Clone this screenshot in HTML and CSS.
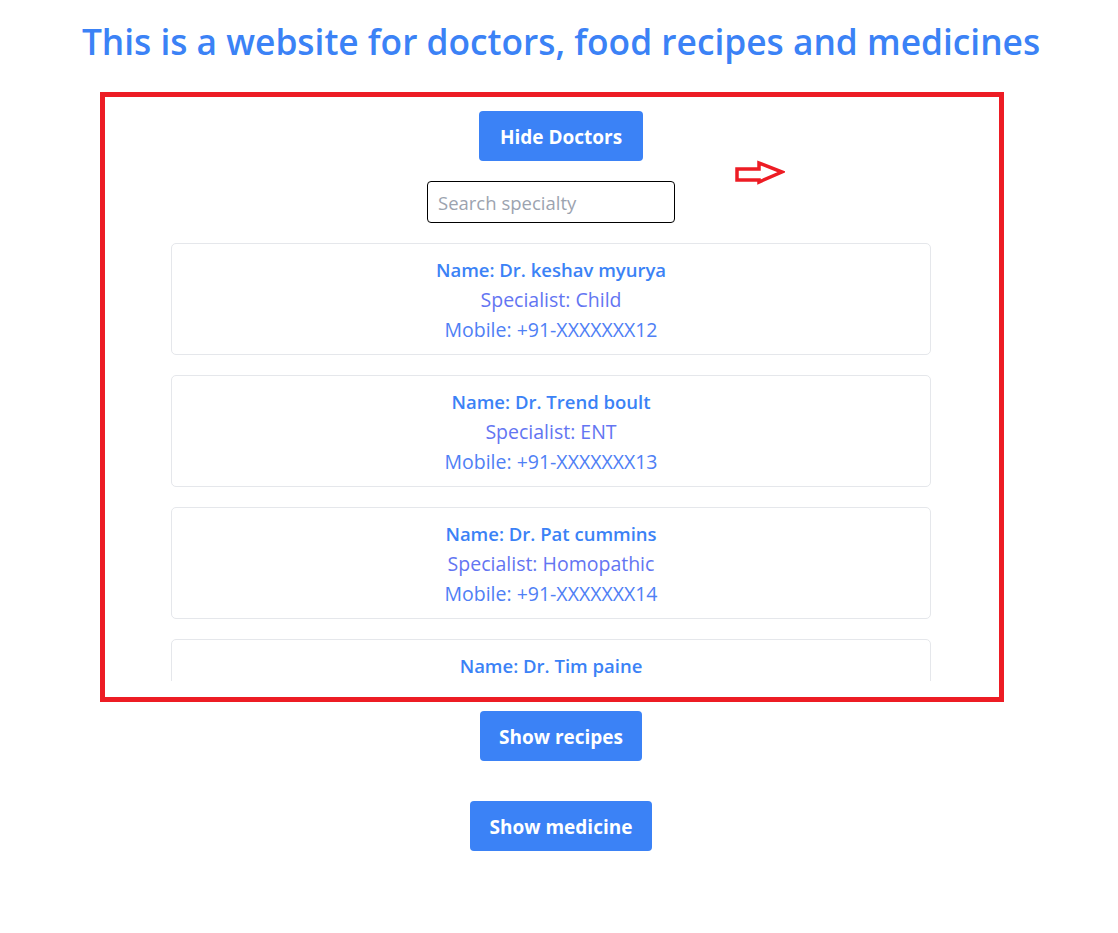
FILE: index.html
```html
<!DOCTYPE html>
<html lang="en">
<head>
<meta charset="utf-8">
<title>Doctors, recipes and medicines</title>
<link rel="stylesheet" href="styles.css">
</head>
<body>
<div class="page">
  <h1 class="title">This is a website for doctors, food recipes and medicines</h1>

  <section class="doctors">
    <button class="btn btn-hide">Hide Doctors</button>
    <div class="scroll-area">
      <input class="search" type="text" placeholder="Search specialty">
      <div class="list">
        <div class="card">
          <div class="name">Name: Dr. keshav myurya</div>
          <div class="spec">Specialist: Child</div>
          <div class="mobile">Mobile: +91-XXXXXXX12</div>
        </div>
        <div class="card">
          <div class="name">Name: Dr. Trend boult</div>
          <div class="spec">Specialist: ENT</div>
          <div class="mobile">Mobile: +91-XXXXXXX13</div>
        </div>
        <div class="card">
          <div class="name">Name: Dr. Pat cummins</div>
          <div class="spec">Specialist: Homopathic</div>
          <div class="mobile">Mobile: +91-XXXXXXX14</div>
        </div>
        <div class="card">
          <div class="name">Name: Dr. Tim paine</div>
          <div class="spec">Specialist: Heart</div>
          <div class="mobile">Mobile: +91-XXXXXXX15</div>
        </div>
      </div>
    </div>
  </section>

  <div class="more">
    <button class="btn btn-recipes">Show recipes</button>
    <button class="btn btn-medicine">Show medicine</button>
  </div>

  <div class="frame" aria-hidden="true"></div>
  <svg class="arrow" width="52" height="28" viewBox="0 0 52 28" aria-hidden="true">
    <path d="M4 10 L26 10 L26 4 L49 13 L26 23 L26 21 L4 21 Z" fill="#ffffff" stroke="#ed1c24" stroke-width="3.5" stroke-linejoin="miter"/>
  </svg>
</div>
</body>
</html>
```

FILE: styles.css
```css
* { box-sizing: border-box; }

html, body {
  margin: 0;
  padding: 0;
  background: #ffffff;
}

body {
  font-family: "Open Sans", "Noto Sans", "Liberation Sans", sans-serif;
}

.page {
  position: relative;
  width: 1118px;
  min-height: 933px;
  padding: 21px 0 0 4px;
  text-align: center;
}

.title {
  margin: 0;
  font-size: 35.3px;
  line-height: 40px;
  font-weight: 600;
  color: #3b82f6;
}

.doctors {
  display: flex;
  flex-direction: column;
  align-items: center;
  margin-top: 50px;
}

.btn {
  font-family: inherit;
  font-size: 19px;
  line-height: 28px;
  font-weight: 700;
  color: #ffffff;
  background: #3b82f6;
  border: none;
  border-radius: 4px;
  height: 50px;
  padding: 2px 0 0;
  white-space: nowrap;
}

.btn-hide { width: 164px; }

.scroll-area {
  align-self: stretch;
  margin-right: 20px;
  margin-top: 20px;
  height: 500px;
  overflow: hidden;
  display: flex;
  flex-direction: column;
  align-items: center;
}

.search {
  width: 248px;
  height: 42px;
  border: 1px solid #000000;
  border-radius: 4px;
  padding: 0 10px;
  font-family: inherit;
  font-size: 18.5px;
  color: #111827;
  flex-shrink: 0;
}

.search::placeholder { color: #9ca3af; }

.list {
  margin-top: 20px;
  display: flex;
  flex-direction: column;
  gap: 20px;
}

.card {
  width: 760px;
  height: 112px;
  flex-shrink: 0;
  border: 1px solid #e5e7eb;
  border-radius: 5px;
  padding: 11px 0 9px;
  font-size: 19.5px;
  line-height: 30px;
}

.name { font-weight: 600; font-size: 18.5px; color: #3b82f6; }
.spec { color: #6375f2; }
.mobile { color: #4f80f5; }

.more {
  display: flex;
  flex-direction: column;
  align-items: center;
  gap: 40px;
  margin-top: 30px;
}

.btn-recipes { width: 162px; }
.btn-medicine { width: 182px; }

.frame {
  position: absolute;
  left: 100px;
  top: 92px;
  width: 904px;
  height: 610px;
  border: 5px solid #ed1c24;
  pointer-events: none;
}

.arrow {
  position: absolute;
  left: 733px;
  top: 159px;
}
```
